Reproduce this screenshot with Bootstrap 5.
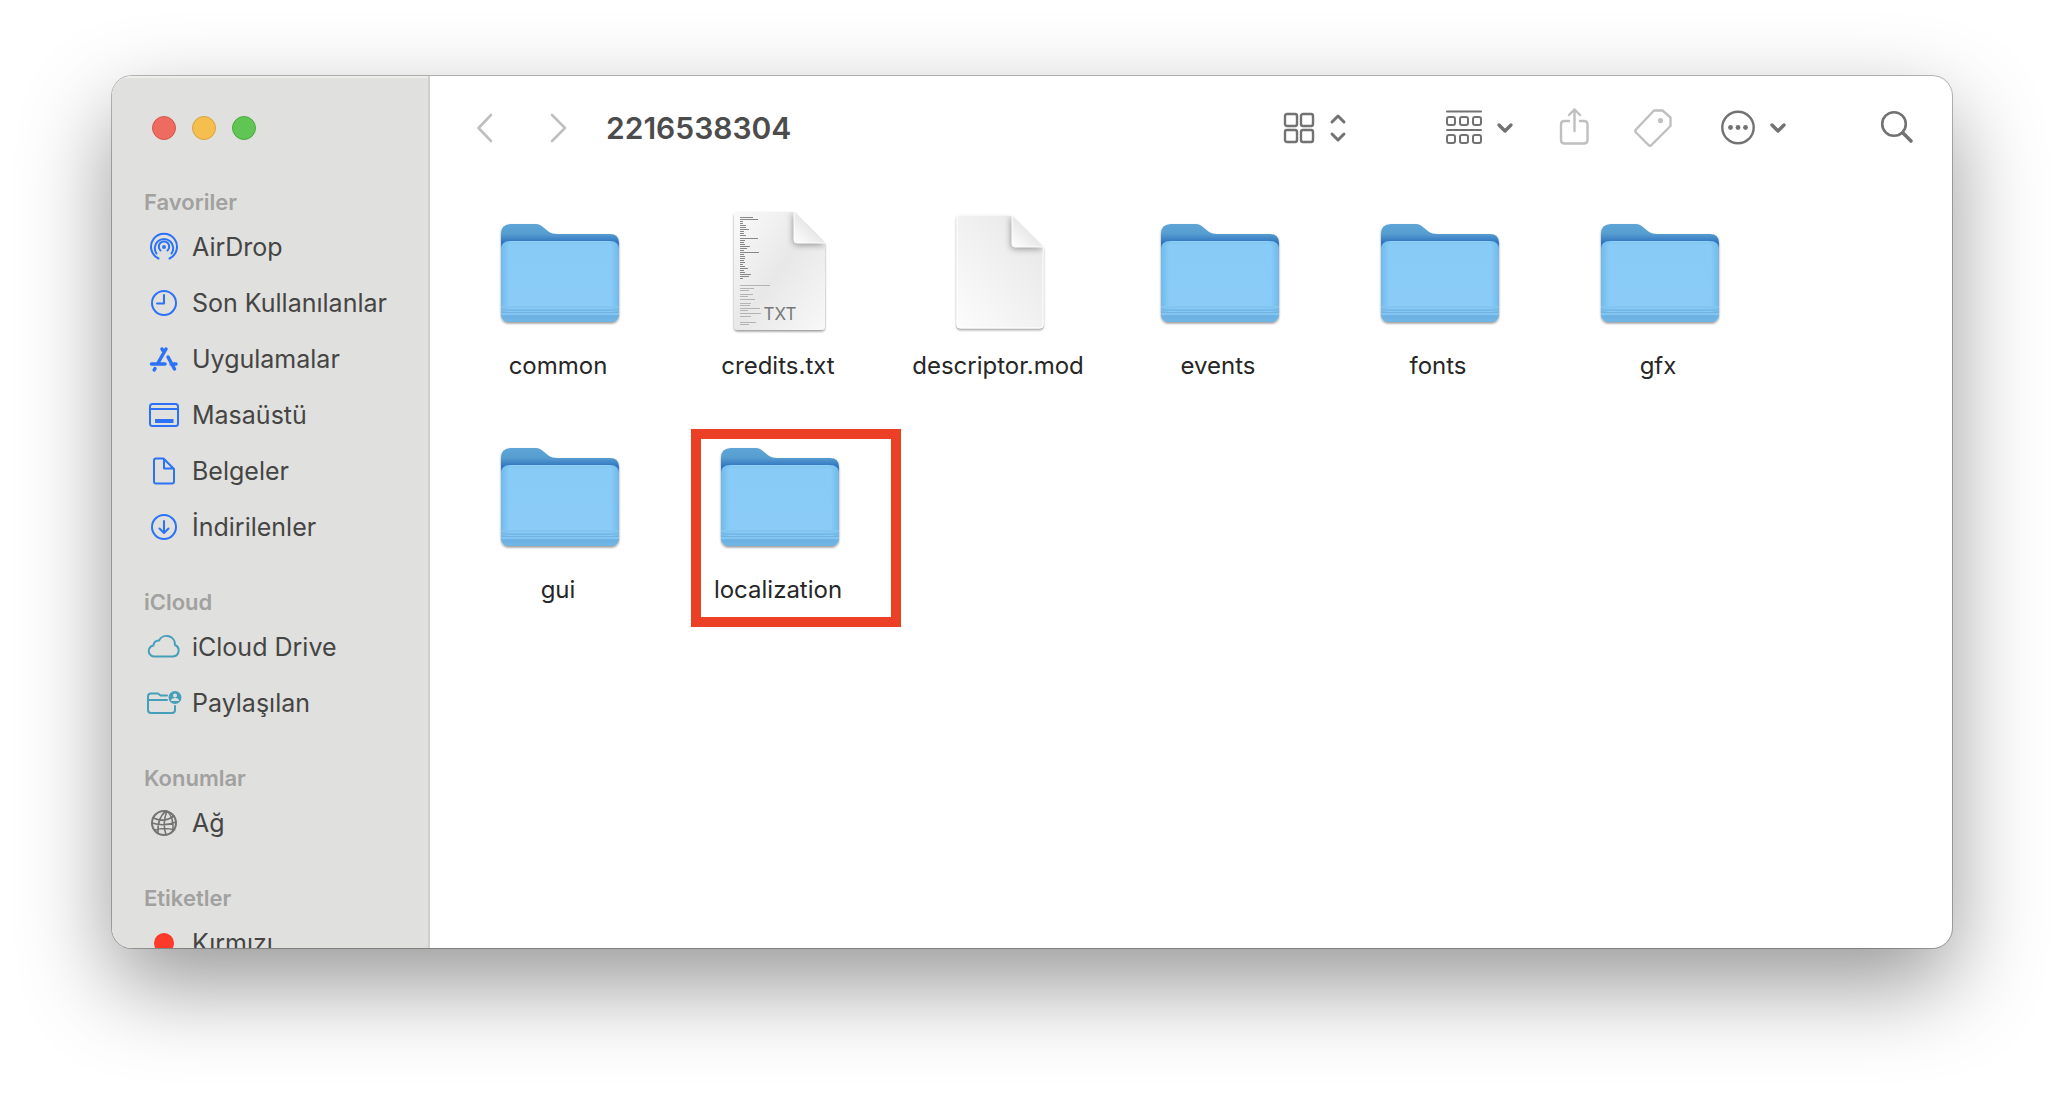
<!DOCTYPE html>
<html lang="tr">
<head>
<meta charset="utf-8">
<meta name="viewport" content="width=device-width, initial-scale=1">
<title>2216538304</title>
<link href="https://cdn.jsdelivr.net/npm/bootstrap@5.3.0/dist/css/bootstrap.min.css" rel="stylesheet">
<style>
body { font-family: Inter, "Liberation Sans", sans-serif; background: #fff; }
.desktop { min-height: 100vh; padding: 76px 112px 148px; }
.finder { height: calc(100vh - 224px); border-radius: 20px; background: #fff;
  box-shadow: 0 0 0 1px rgba(0,0,0,.26), 0 36px 90px rgba(0,0,0,.41); }
.sidebar { width: 318px; background: #e0e0de; border-right: 2px solid #cfcfcd; box-shadow: inset 0 2px 0 #ededec; }
.lights { height: 104px; padding-left: 40px; gap: 16px; }
.light { width: 24px; height: 24px; padding: 0; border-radius: 50%; border: 1px solid; }
.light-close { background: #ed6b60; border-color: #d6574c; }
.light-min { background: #f5bf4f; border-color: #dba23b; }
.light-max { background: #61c554; border-color: #4caa40; }
.places { padding: 5px 0 0 32px; }
.section { margin-bottom: 30px; }
.section-title { font-size: 22px; line-height: 34px; font-weight: 600; color: #a1a19f; margin: 0; }
.place { height: 56px; padding-top: 2px; gap: 8px; font-size: 25px; color: #454544; text-decoration: none; white-space: nowrap; }
.place svg { width: 40px; height: 40px; margin-bottom: 2px; flex: none; fill: none; stroke: #2b72f6; stroke-width: 2; stroke-linecap: round; stroke-linejoin: round; }
.place .teal { stroke: #469fb8; }
.place .gray { stroke: #737372; }
.toolbar { height: 104px; padding: 0 37px 0 44px; }
.tool { border: 0; padding: 0; background: none; color: #727272; display: flex; align-items: center; gap: 13px; }
.tool:disabled { color: #bfbfbf; }
.tool svg { fill: none; stroke: currentColor; stroke-width: 2; stroke-linecap: round; stroke-linejoin: round; }
.forward { margin-left: 52px; }
.group-by { margin-left: 98px; }
.share { margin-left: 44px; }
.tags { margin-left: 43px; }
.more { margin-left: 47px; }
.find { margin-left: 92px; }
.folder-name { font-size: 30px; line-height: 36px; font-weight: 600; color: #4c4c4c; margin: 0 0 0 36px; }
.files { padding: 30px 18px 0; row-gap: 53px; }
.file { width: 220px; color: #262626; text-decoration: none; font-size: 24px; line-height: 30px; gap: 13px; }
.file-art { width: 128px; height: 128px; overflow: visible; }
.marker { position: absolute; top: -5px; bottom: -22px; left: 23px; right: -13px; border: 10px solid #eb4026; pointer-events: none; }
</style>
</head>
<body>
<svg width="0" height="0" class="position-absolute" aria-hidden="true">
  <defs>
    <linearGradient id="backFill" x1="0" y1="0" x2="0" y2="1"><stop offset="0" stop-color="#5ea5d6"/><stop offset=".1" stop-color="#579dd1"/><stop offset=".19" stop-color="#2f74bf"/><stop offset=".25" stop-color="#3f8fd0"/><stop offset="1" stop-color="#5ea5d6"/></linearGradient>
    <linearGradient id="frontFill" x1="0" y1="0" x2="0" y2="1"><stop offset="0" stop-color="#7fc5f3"/><stop offset=".05" stop-color="#88cbf6"/><stop offset=".8" stop-color="#8accf7"/><stop offset="1" stop-color="#80c3ef"/></linearGradient>
    <linearGradient id="sideShade"><stop offset="0" stop-color="#4b9fdc" stop-opacity=".4"/><stop offset=".07" stop-color="#4b9fdc" stop-opacity="0"/><stop offset=".93" stop-color="#4b9fdc" stop-opacity="0"/><stop offset="1" stop-color="#4b9fdc" stop-opacity=".4"/></linearGradient>
    <linearGradient id="paper" x1="1" y1="0" x2="0" y2="1"><stop offset="0" stop-color="#e6e6e6"/><stop offset=".5" stop-color="#f1f1f1"/><stop offset="1" stop-color="#fcfcfc"/></linearGradient>
    <linearGradient id="paperTxt" x1="0" y1="0" x2="1" y2="1"><stop offset="0" stop-color="#fafafa"/><stop offset=".5" stop-color="#e8e8e8"/><stop offset="1" stop-color="#f8f8f8"/></linearGradient>
    <linearGradient id="flap" x1="1" y1="0" x2="0" y2="1"><stop offset=".4" stop-color="#e4e4e4"/><stop offset="1" stop-color="#ffffff"/></linearGradient>
    <filter id="drop" x="-20%" y="-20%" width="140%" height="140%"><feDropShadow dx="0" dy="1.5" stdDeviation="1.2" flood-opacity=".42"/></filter>
    <filter id="soft" x="-50%" y="-50%" width="200%" height="200%"><feGaussianBlur stdDeviation="3"/></filter>
    <clipPath id="sheetClip"><path d="M0 4a4 4 0 0 1 4-4H60L91 31V114a4 4 0 0 1-4 4H4a4 4 0 0 1-4-4z"/></clipPath>
    <symbol id="folder" viewBox="0 0 128 128" overflow="visible">
      <g filter="url(#drop)">
        <path fill="url(#backFill)" d="M7 24q0-10 10-10H42q4 0 8 4l5 4q3 2 8 2H116q9 0 9 9V103q0 9-9 9H16q-9 0-9-9z"/>
        <path fill="url(#frontFill)" d="M7 40q0-9 9-9H116q9 0 9 9V103q0 9-9 9H16q-9 0-9-9z"/>
      </g>
      <path fill="url(#sideShade)" d="M7 40q0-9 9-9H116q9 0 9 9V103q0 9-9 9H16q-9 0-9-9z"/>
      <path fill="#6fb4e4" d="M7 102H125v1q0 9-9 9H16q-9 0-9-9z"/>
      <path stroke="#9ad4f8" d="M17 31.500H115" opacity=".8"/>
      <path stroke="#76bae9" stroke-width="2" d="M7 100H125"/>
      <path stroke="#84c5f0" stroke-width="2" d="M7 104H125M7 97H125"/>
      <path stroke="#6cb1e1" stroke-width="2" d="M8 107H124"/>
    </symbol>
    <symbol id="sheet" viewBox="0 0 91 118" overflow="visible">
      <g clip-path="url(#sheetClip)">
        <path filter="url(#soft)" fill="#777" opacity=".75" d="M59 0V28q0 5 4 5H92z"/>
      </g>
      <path fill="url(#flap)" d="M60 0L91 31H63q-3 0-3-3z"/>
      <path fill="none" stroke="#fff" d="M60 0V28q0 3 3 3H91"/>
    </symbol>
    <symbol id="caret" viewBox="0 0 18 12"><path stroke-width="3.400" d="M3 3l6 6 6-6"/></symbol>
  </defs>
</svg>

<div class="desktop">
  <main class="finder d-flex overflow-hidden">
    <aside class="sidebar flex-shrink-0 overflow-hidden">
      <div class="lights d-flex align-items-center">
        <button class="light light-close" aria-label="Kapat"></button>
        <button class="light light-min" aria-label="Küçült"></button>
        <button class="light light-max" aria-label="Büyüt"></button>
      </div>
      <nav class="places">
        <section class="section">
          <h2 class="section-title">Favoriler</h2>
          <a class="place d-flex align-items-center" href="#"><svg viewBox="0 0 40 40"><path d="M14.500 31.500a13 13 0 1 1 11 0M12.500 26.500a9.200 9.200 0 1 1 15 0M16.500 23.500a5.200 5.200 0 1 1 7 0"/><circle cx="20" cy="20" r="2" fill="#2b72f6" stroke="none"/></svg>AirDrop</a>
          <a class="place d-flex align-items-center" href="#"><svg viewBox="0 0 40 40"><circle cx="20" cy="20" r="12"/><path d="M20 12v8.500h-7"/></svg>Son Kullanılanlar</a>
          <a class="place d-flex align-items-center" href="#"><svg viewBox="0 0 40 40"><path stroke-width="3.500" d="M22 10L14 24M7.500 25H21M18 10l2 3M24 18l6.500 12M27 25h5M11 29.500l-.8 1.500"/></svg>Uygulamalar</a>
          <a class="place d-flex align-items-center" href="#"><svg viewBox="0 0 40 40"><rect x="6" y="9" width="28" height="22" rx="2.500"/><path d="M6 14H34"/><path fill="#2b72f6" stroke="none" d="M11 24H29.500V28H11z"/></svg>Masaüstü</a>
          <a class="place d-flex align-items-center" href="#"><svg viewBox="0 0 40 40"><path d="M12 7.500h7.500L30 18V30.500a2 2 0 0 1-2 2H12a2 2 0 0 1-2-2V9.500a2 2 0 0 1 2-2zM20 8v9.500h9.500"/></svg>Belgeler</a>
          <a class="place d-flex align-items-center" href="#"><svg viewBox="0 0 40 40"><circle cx="20" cy="20" r="12"/><path d="M20 14v11M15.500 21.500l4.500 4.500 4.500-4.500"/></svg>İndirilenler</a>
        </section>
        <section class="section">
          <h2 class="section-title">iCloud</h2>
          <a class="place d-flex align-items-center" href="#"><svg class="teal" viewBox="0 0 40 40"><path d="M11 29.500H29a6 6 0 0 0 2-11.500 8.500 8.500 0 0 0-16-4.500 5 5 0 0 0-5.500 5A5.500 5.500 0 0 0 11 29.500z"/></svg>iCloud Drive</a>
          <a class="place d-flex align-items-center" href="#"><svg class="teal" viewBox="0 0 40 40"><path d="M23 12.500H16.500l-2.500-2H7q-3 0-3 3V27q0 3 3 3H28q3 0 3-3V23M4 17H23"/><circle cx="31" cy="14.500" r="6.500" fill="#469fb8" stroke="none"/><circle cx="31" cy="12.500" r="2" fill="#e0e0de" stroke="none"/><path fill="#e0e0de" stroke="none" d="M27 18a4 3 0 0 1 8 0z"/></svg>Paylaşılan</a>
        </section>
        <section class="section">
          <h2 class="section-title">Konumlar</h2>
          <a class="place d-flex align-items-center" href="#"><svg class="gray" viewBox="0 0 40 40"><circle cx="20" cy="20" r="12"/><path stroke-width="1.600" d="M9.500 15q10.500 5 20.500-2M8 20q12 4 24-1M11 27q9-3 19.500 0M22 8q-9 7-8 22M23 8q-5 12-1 24M23 8q7 6 6 20"/></svg>Ağ</a>
        </section>
        <section class="section">
          <h2 class="section-title">Etiketler</h2>
          <a class="place d-flex align-items-center" href="#"><svg viewBox="0 0 40 40"><circle cx="20" cy="20" r="10" fill="#fc3a2b" stroke="none"/></svg>Kırmızı</a>
        </section>
      </nav>
    </aside>

    <section class="flex-grow-1 overflow-hidden">
      <header class="toolbar d-flex align-items-center">
        <button class="tool" aria-label="Geri" disabled><svg width="22" height="32"><path stroke-width="2.600" d="M17 3L4.500 16 17 29"/></svg></button>
        <button class="tool forward" aria-label="İleri" disabled><svg width="22" height="32"><path stroke-width="2.600" d="M4 3L17 16 4 29"/></svg></button>
        <h1 class="folder-name">2216538304</h1>
        <div class="d-flex align-items-center ms-auto">
          <button class="tool" aria-label="Görünüm">
            <svg width="34" height="34"><g stroke-width="2.400"><rect x="3" y="3" width="12" height="12" rx="2"/><rect x="19" y="3" width="12" height="12" rx="2"/><rect x="3" y="19" width="12" height="12" rx="2"/><rect x="19" y="19" width="12" height="12" rx="2"/></g></svg>
            <svg width="18" height="30"><path stroke-width="3" d="M3 9l6-6 6 6M3 21l6 6 6-6"/></svg>
          </button>
          <button class="tool group-by" aria-label="Grupla">
            <svg width="38" height="36"><path d="M2 1.500H36M2 20H36"/><g><rect x="2" y="7" width="8" height="8" rx="2"/><rect x="15" y="7" width="8" height="8" rx="2"/><rect x="28" y="7" width="8" height="8" rx="2"/><rect x="2" y="25" width="8" height="8" rx="2"/><rect x="15" y="25" width="8" height="8" rx="2"/><rect x="28" y="25" width="8" height="8" rx="2"/></g></svg>
            <svg width="18" height="12"><use href="#caret"/></svg>
          </button>
          <button class="tool share" aria-label="Paylaş" disabled><svg width="32" height="40"><path stroke-width="2.400" d="M11 13H6.500Q3 13 3 16.500V32q0 3.500 3.500 3.500H26q3.500 0 3.500-3.500V16.500Q29.500 13 26 13H22M16.500 23V1.500M11 7l5.500-5.500L22 7"/></svg></button>
          <button class="tool tags" aria-label="Etiketler" disabled><svg width="40" height="40"><path stroke-width="2.400" d="M21 2.500h8.500L37.500 9.500V18L18.500 37q-1.500 1.500-3 0L3 24.500q-1.500-1.500 0-3z"/><circle cx="27.500" cy="12.500" r="2.600" fill="currentColor" stroke="none"/></svg></button>
          <button class="tool more" aria-label="İşlemler">
            <svg width="36" height="36"><circle cx="18" cy="17.500" r="15.700" stroke-width="2.400"/><g fill="currentColor" stroke="none"><circle cx="10.500" cy="17.500" r="2.400"/><circle cx="18" cy="17.500" r="2.400"/><circle cx="25.500" cy="17.500" r="2.400"/></g></svg>
            <svg width="18" height="12"><use href="#caret"/></svg>
          </button>
          <button class="tool find" aria-label="Ara"><svg width="36" height="36"><circle cx="15" cy="14" r="11.800" stroke-width="2.600"/><path stroke-width="3.600" d="M24 23l8 8"/></svg></button>
        </div>
      </header>

      <div class="files d-flex flex-wrap">
        <a class="file d-flex flex-column align-items-center" href="#"><svg class="file-art"><use href="#folder"/></svg>common</a>
        <a class="file d-flex flex-column align-items-center" href="#"><svg class="file-art" viewBox="0 0 128 128">
          <g transform="translate(20 2)">
            <path filter="url(#drop)" fill="url(#paperTxt)" d="M0 4a4 4 0 0 1 4-4H60L91 31V114a4 4 0 0 1-4 4H4a4 4 0 0 1-4-4z"/>
            <use href="#sheet" width="91" height="118"/>
            <path fill="none" stroke="#888" stroke-width="1" d="M6 5.500h13M6 7.500h18M6 9.500h3M6 11.500h3M6 13.500h6M6 15.500h6M6 17.500h9M6 19.500h4M6 21.500h4M6 23.500h6M6 26.500h18M6 28.500h5M6 30.500h4M6 32.500h5M6 34.500h10M6 36.500h7M6 38.500h4M6 40.500h19M6 42.500h4M6 44.500h5M6 46.500h5M6 48.500h4M6 50.500h5M6 52.500h3M6 54.500h5M6 56.500h8M6 58.500h4M6 60.500h5M6 62.500h11M6 64.500h9M6 66.500h3"/>
            <path fill="none" stroke="#b4b4b4" stroke-width="1" d="M6 73.500h30M6 76.500h14M6 78.500h9M6 82.500h13M6 84.500h8M6 87.500h15M6 91.500h11M6 93.500h10M6 96.500h20M6 98.500h8M6 101.500h21M6 104.500h11M6 110.500h16M6 112.500h9"/>
            <text x="46" y="108" text-anchor="middle" font-size="17" fill="#777">TXT</text>
          </g></svg>credits.txt</a>
        <a class="file d-flex flex-column align-items-center" href="#"><svg class="file-art" viewBox="0 0 128 128">
          <g transform="translate(23 5)">
            <path filter="url(#drop)" fill="url(#paper)" stroke="#fff" d="M0 3a3 3 0 0 1 3-3H54L86 32V110a3 3 0 0 1-3 3H3a3 3 0 0 1-3-3z"/>
            <use href="#sheet" x="-5" y="1" width="91" height="118"/>
          </g></svg>descriptor.mod</a>
        <a class="file d-flex flex-column align-items-center" href="#"><svg class="file-art"><use href="#folder"/></svg>events</a>
        <a class="file d-flex flex-column align-items-center" href="#"><svg class="file-art"><use href="#folder"/></svg>fonts</a>
        <a class="file d-flex flex-column align-items-center" href="#"><svg class="file-art"><use href="#folder"/></svg>gfx</a>
        <a class="file d-flex flex-column align-items-center" href="#"><svg class="file-art"><use href="#folder"/></svg>gui</a>
        <a class="file d-flex flex-column align-items-center position-relative" href="#"><svg class="file-art"><use href="#folder"/></svg>localization<span class="marker"></span></a>
      </div>
    </section>
  </main>
</div>
<script src="https://cdn.jsdelivr.net/npm/bootstrap@5.3.0/dist/js/bootstrap.bundle.min.js"></script>
</body>
</html>
